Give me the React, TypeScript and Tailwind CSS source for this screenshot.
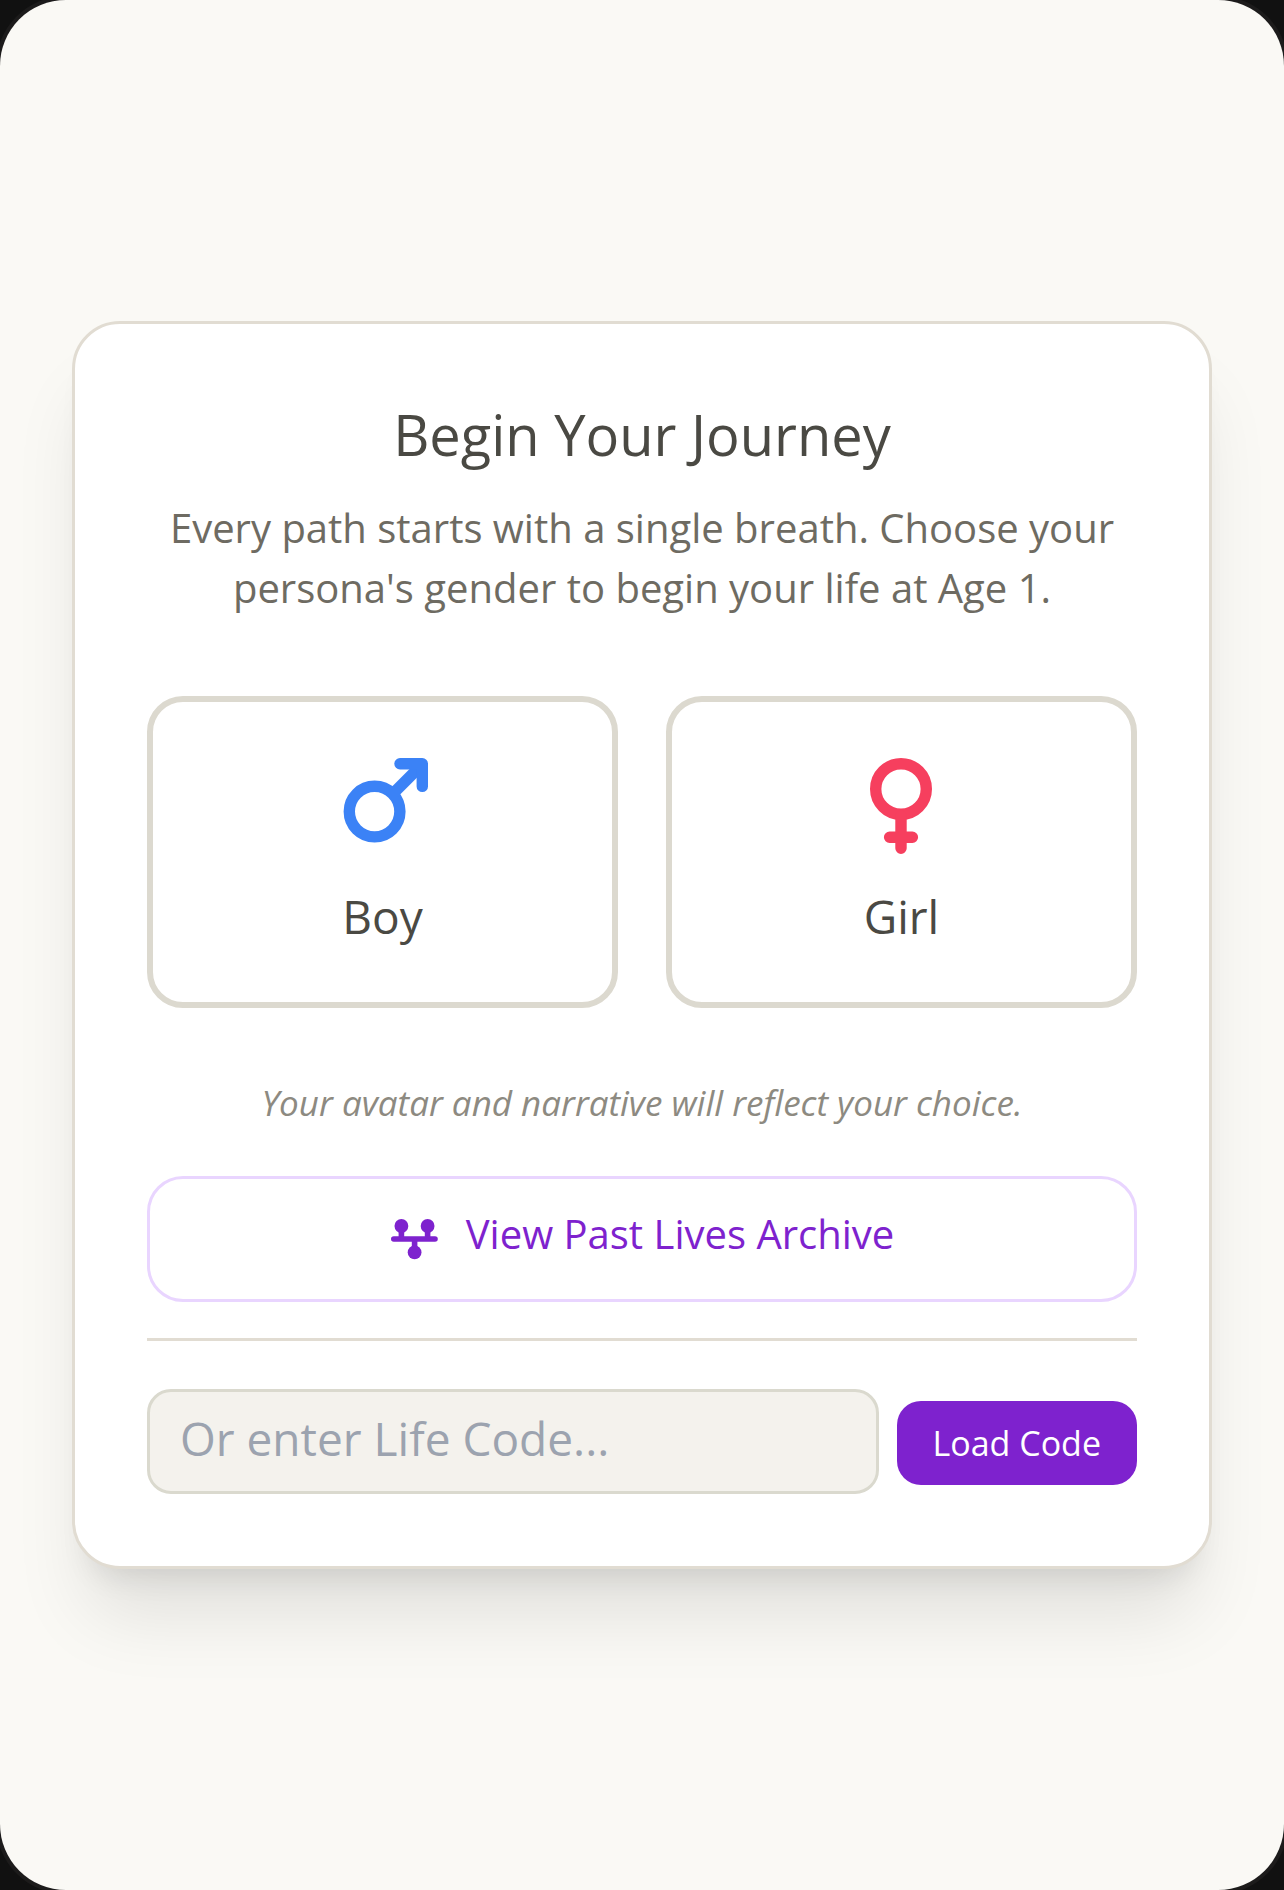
import { useState } from 'react';

const genders = [
  { id: 'boy', label: 'Boy', Icon: MarsIcon },
  { id: 'girl', label: 'Girl', Icon: VenusIcon },
];

function MarsIcon() {
  return (
    <svg viewBox="0 0 96 96" className="h-24 w-24 text-[#3b82f6]" fill="none" stroke="currentColor" strokeWidth="11.4" strokeLinecap="round" strokeLinejoin="round" aria-hidden="true">
      <circle cx="39.6" cy="53.6" r="25.3" />
      <path d="M58.6 35 L85.6 8" strokeLinecap="butt" />
      <path d="M65 5.7 H87.3 V28.4" />
    </svg>
  );
}

function VenusIcon() {
  return (
    <svg viewBox="0 0 96 96" className="h-24 w-24 text-[#f63f5e]" fill="none" stroke="currentColor" strokeWidth="11.4" strokeLinecap="round" aria-hidden="true">
      <circle cx="47" cy="31" r="25.3" />
      <path d="M47 58 V90.3 M35.6 79.2 H58.4" />
    </svg>
  );
}

function LineageIcon() {
  return (
    <svg viewBox="0 -10 48 52" className="h-[52px] w-12" fill="currentColor" stroke="currentColor" strokeWidth="5.6" strokeLinecap="round" aria-hidden="true">
      <path d="M3.8 21 H45 M11.4 8 V21 M37.6 8 V21 M24.6 21 V34" />
      <circle cx="11.4" cy="8" r="6.9" stroke="none" />
      <circle cx="37.6" cy="8" r="6.9" stroke="none" />
      <circle cx="24.6" cy="34.4" r="6.9" stroke="none" />
    </svg>
  );
}

export default function App() {
  const [lifeCode, setLifeCode] = useState('');

  return (
    <div className="min-h-screen bg-[#111111] font-['Open_Sans','Liberation_Sans',sans-serif]">
      <main className="flex min-h-screen items-center justify-center rounded-[66px] bg-[#faf9f5] px-[72px] py-12 shadow-[0_0_0_4px_#1c1b1b]">
        <section className="w-full rounded-[48px] border-[3px] border-[#e1dcd2] bg-white p-[72px] shadow-[0_60px_75px_-15px_rgba(0,0,0,0.1),0_24px_30px_-18px_rgba(0,0,0,0.1)]">
          <div className="text-center">
            <h1 className="text-[56px] leading-[76px] text-[#4a4943]">Begin Your Journey</h1>
            <p className="mt-[26px] text-[40px] leading-[60px] text-[#6e6b62]">
              Every path starts with a single breath. Choose your persona's gender to begin your life at Age 1.
            </p>
          </div>

          <div className="mt-[78px] grid grid-cols-2 gap-12">
            {genders.map(({ id, label, Icon }) => (
              <button
                key={id}
                type="button"
                className="flex flex-col items-center rounded-[36px] border-[6px] border-[#dcd9cf] bg-white px-12 pt-14 pb-[50px]"
              >
                <Icon />
                <span className="mt-[26px] text-[46px] leading-[72px] text-[#4a4943]">{label}</span>
              </button>
            ))}
          </div>

          <p className="mt-[71px] text-center text-[35px] leading-[48px] text-[#8d8a81] italic">
            Your avatar and narrative will reflect your choice.
          </p>

          <button
            type="button"
            className="mt-[49px] flex w-full items-center justify-center gap-7 rounded-[36px] border-[3px] border-[#e9d5ff] bg-white px-9 pt-[25px] pb-[35px] text-[40px] leading-[60px] text-[#7e22ce]"
          >
            <LineageIcon />
            View Past Lives Archive
          </button>

          <form
            className="mt-9 flex items-baseline gap-[18px] border-t-[3px] border-[#e1dcd2] pt-12"
            onSubmit={(e) => e.preventDefault()}
          >
            <input
              type="text"
              aria-label="Life Code"
              placeholder="Or enter Life Code..."
              value={lifeCode}
              onChange={(e) => setLifeCode(e.target.value)}
              className="min-w-0 flex-1 rounded-[24px] border-[3px] border-[#dad9ce] bg-[#f4f2ed] px-[30px] pt-[17px] pb-[23px] text-[46px] leading-[59px] text-[#4a4943] placeholder:text-[#9ca3af]"
            />
            <button
              type="submit"
              className="rounded-[24px] bg-[#7e22ce] px-9 py-[18px] text-[34px] leading-[48px] whitespace-nowrap text-white"
            >
              Load Code
            </button>
          </form>
        </section>
      </main>
    </div>
  );
}
